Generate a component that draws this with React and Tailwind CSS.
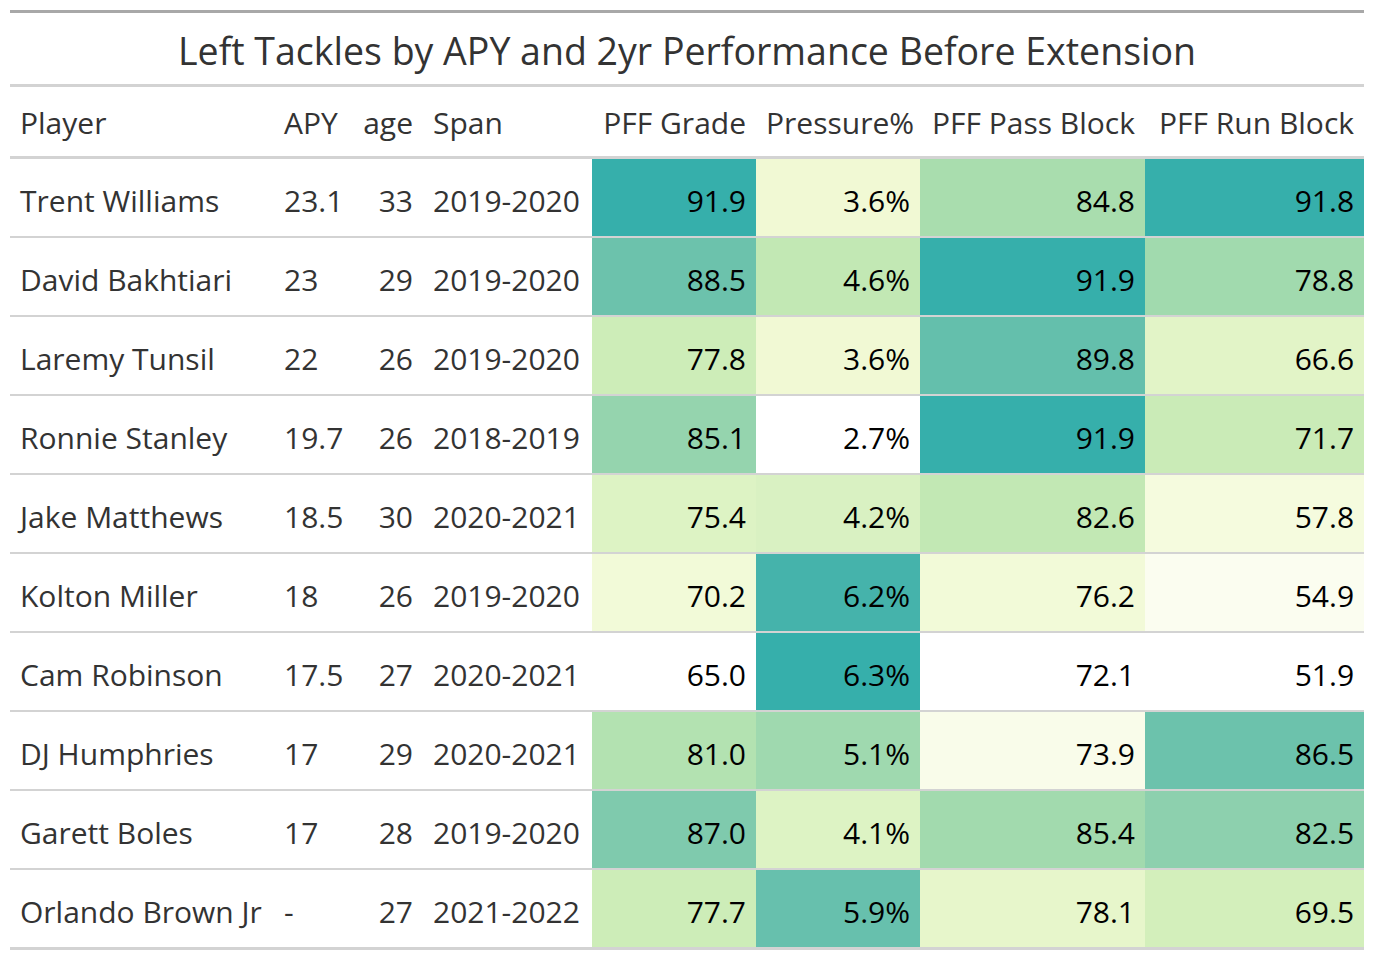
import React from 'react';

const rows = [
  { name: 'Trent Williams', apy: '23.1', age: 33, span: '2019-2020', grade: ['91.9', '#36afab'], press: ['3.6%', '#f1f9d4'], pass: ['84.8', '#a9ddae'], run: ['91.8', '#36afab'] },
  { name: 'David Bakhtiari', apy: '23', age: 29, span: '2019-2020', grade: ['88.5', '#6cc2ac'], press: ['4.6%', '#c2e8b4'], pass: ['91.9', '#36afab'], run: ['78.8', '#a1daae'] },
  { name: 'Laremy Tunsil', apy: '22', age: 26, span: '2019-2020', grade: ['77.8', '#cdedb8'], press: ['3.6%', '#f1f9d4'], pass: ['89.8', '#64bfac'], run: ['66.6', '#e2f4c7'] },
  { name: 'Ronnie Stanley', apy: '19.7', age: 26, span: '2018-2019', grade: ['85.1', '#95d4ae'], press: ['2.7%', '#ffffff'], pass: ['91.9', '#36afab'], run: ['71.7', '#caebb7'] },
  { name: 'Jake Matthews', apy: '18.5', age: 30, span: '2020-2021', grade: ['75.4', '#ddf3c4'], press: ['4.2%', '#d9f1c2'], pass: ['82.6', '#c2e8b4'], run: ['57.8', '#f5fbde'] },
  { name: 'Kolton Miller', apy: '18', age: 26, span: '2019-2020', grade: ['70.2', '#f2fad8'], press: ['6.2%', '#45b3ab'], pass: ['76.2', '#f2fad8'], run: ['54.9', '#fbfdf0'] },
  { name: 'Cam Robinson', apy: '17.5', age: 27, span: '2020-2021', grade: ['65.0', '#ffffff'], press: ['6.3%', '#36afab'], pass: ['72.1', '#ffffff'], run: ['51.9', '#ffffff'] },
  { name: 'DJ Humphries', apy: '17', age: 29, span: '2020-2021', grade: ['81.0', '#b3e2b1'], press: ['5.1%', '#9fd9af'], pass: ['73.9', '#f9fcea'], run: ['86.5', '#6cc2ac'] },
  { name: 'Garett Boles', apy: '17', age: 28, span: '2019-2020', grade: ['87.0', '#7fcaad'], press: ['4.1%', '#ddf3c4'], pass: ['85.4', '#a2daae'], run: ['82.5', '#8dd0ae'] },
  { name: 'Orlando Brown Jr', apy: '-', age: 27, span: '2021-2022', grade: ['77.7', '#cdedb8'], press: ['5.9%', '#67c0ad'], pass: ['78.1', '#e7f6cb'], run: ['69.5', '#d3efbb'] },
];

// colored stat cell
function Stat({ cell }) {
  return (
    <td className="px-[10px] pt-[5px] text-right text-black" style={{ backgroundColor: cell[1] }}>
      {cell[0]}
    </td>
  );
}

export default function App() {
  return (
    <div className="bg-white px-[10px] pt-[10px] pb-[10px]" style={{ fontFamily: '"Open Sans", "Noto Sans", sans-serif' }}>
      <table className="w-[1354px] table-fixed border-separate border-spacing-0 text-[30px] text-[#333333]">
        <colgroup>
          <col className="w-[264px]" />
          <col className="w-[78px]" />
          <col className="w-[71px]" />
          <col className="w-[169px]" />
          <col className="w-[164px]" />
          <col className="w-[164px]" />
          <col className="w-[225px]" />
          <col className="w-[219px]" />
        </colgroup>
        <thead>
          <tr>
            <th colSpan={8} className="h-[77px] pt-[6px] border-t-[3px] border-b-[3px] border-t-[#a8a8a8] border-b-[#d3d3d3] text-center text-[37.5px] font-normal">
              Left Tackles by APY and 2yr Performance Before Extension
            </th>
          </tr>
          <tr className="[&>th]:border-b-[3px] [&>th]:border-[#d3d3d3] [&>th]:px-[10px] [&>th]:pt-[2px] [&>th]:font-normal">
            <th className="h-[72px] text-left">Player</th>
            <th className="text-left">APY</th>
            <th className="text-right">age</th>
            <th className="text-left">Span</th>
            <th className="text-right whitespace-nowrap">PFF Grade</th>
            <th className="text-right">Pressure%</th>
            <th className="text-right whitespace-nowrap">PFF Pass Block</th>
            <th className="text-right whitespace-nowrap">PFF Run Block</th>
          </tr>
        </thead>
        <tbody>
          {rows.map((r, i) => (
            <tr key={r.name} className={i === rows.length - 1 ? 'h-[80px] [&>td]:border-b-[3px] [&>td]:border-[#d3d3d3]' : 'h-[79px] [&>td]:border-b-2 [&>td]:border-[#d3d3d3]'}>
              <td className="px-[10px] pt-[5px] whitespace-nowrap">{r.name}</td>
              <td className="px-[10px] pt-[5px] text-left">{r.apy}</td>
              <td className="px-[10px] pt-[5px] text-right">{r.age}</td>
              <td className="px-[10px] pt-[5px] text-left">{r.span}</td>
              <Stat cell={r.grade} />
              <Stat cell={r.press} />
              <Stat cell={r.pass} />
              <Stat cell={r.run} />
            </tr>
          ))}
        </tbody>
      </table>
    </div>
  );
}
